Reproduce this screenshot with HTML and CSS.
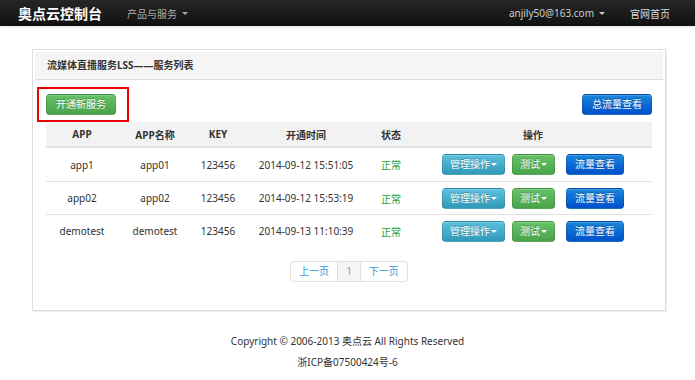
FILE: index.html
```html
<!DOCTYPE html>
<html>
<head>
    <meta charset="utf-8">
    <title>奥点云控制台</title>
    <link rel="stylesheet" href="styles.css">
</head>
<body>
    <div class="navbar">
        <span class="brand">奥点云控制台</span>
        <span class="nav-item products">产品与服务 <b class="caret"></b></span>
        <div class="nav-right">
            <span class="nav-item user">anjily50@163.com <b class="caret"></b></span>
            <span class="nav-item home">官网首页</span>
        </div>
    </div>

    <div class="panel">
        <div class="panel-heading">流媒体直播服务LSS——服务列表</div>
        <div class="panel-body">
            <div class="toolbar">
                <span class="highlight"><span class="btn btn-success">开通新服务</span></span>
                <span class="btn btn-primary">总流量查看</span>
            </div>

            <table class="list">
                <colgroup>
                    <col class="c-app">
                    <col class="c-name">
                    <col class="c-key">
                    <col class="c-time">
                    <col class="c-status">
                    <col class="c-ops">
                </colgroup>
                <thead>
                    <tr>
                        <th>APP</th>
                        <th>APP名称</th>
                        <th>KEY</th>
                        <th>开通时间</th>
                        <th>状态</th>
                        <th>操作</th>
                    </tr>
                </thead>
                <tbody>
                    <tr>
                        <td>app1</td>
                        <td>app01</td>
                        <td>123456</td>
                        <td>2014-09-12 15:51:05</td>
                        <td class="ok">正常</td>
                        <td>
                            <div class="ops">
                                <span class="btn btn-info">管理操作<b class="caret"></b></span>
                                <span class="btn btn-success">测试<b class="caret"></b></span>
                                <span class="btn btn-primary">流量查看</span>
                            </div>
                        </td>
                    </tr>
                    <tr>
                        <td>app02</td>
                        <td>app02</td>
                        <td>123456</td>
                        <td>2014-09-12 15:53:19</td>
                        <td class="ok">正常</td>
                        <td>
                            <div class="ops">
                                <span class="btn btn-info">管理操作<b class="caret"></b></span>
                                <span class="btn btn-success">测试<b class="caret"></b></span>
                                <span class="btn btn-primary">流量查看</span>
                            </div>
                        </td>
                    </tr>
                    <tr>
                        <td>demotest</td>
                        <td>demotest</td>
                        <td>123456</td>
                        <td>2014-09-13 11:10:39</td>
                        <td class="ok">正常</td>
                        <td>
                            <div class="ops">
                                <span class="btn btn-info">管理操作<b class="caret"></b></span>
                                <span class="btn btn-success">测试<b class="caret"></b></span>
                                <span class="btn btn-primary">流量查看</span>
                            </div>
                        </td>
                    </tr>
                </tbody>
            </table>

            <div class="pagination">
                <span class="page">上一页</span>
                <span class="page current">1</span>
                <span class="page">下一页</span>
            </div>
        </div>
    </div>

    <div class="footer">
        <p>Copyright © 2006-2013 奥点云 All Rights Reserved</p>
        <p>浙ICP备07500424号-6</p>
    </div>
</body>
</html>
```

FILE: styles.css
```css
body {
    margin: 0;
    font-family: "Noto Sans", "Noto Sans CJK SC", sans-serif;
    font-size: 10px;
    color: #333;
    background: #fff;
}
.navbar {
    height: 26px;
    display: flex;
    align-items: center;
    padding: 0 25px 0 18px;
    background: linear-gradient(#262626, #111);
    box-shadow: 0 1px 2px rgba(0,0,0,0.12);
}
.brand {
    color: #fff;
    font-size: 14px;
    font-weight: bold;
}
.nav-item {
    display: flex;
    align-items: center;
    gap: 5px;
}
.products {
    margin-left: 25px;
    color: #aaa;
}
.nav-right {
    margin-left: auto;
    display: flex;
    align-items: center;
    gap: 25px;
}
.user { color: #ccc; }
.home { color: #ddd; }
.caret {
    display: inline-block;
    width: 0;
    height: 0;
    border-top: 3px solid currentColor;
    border-left: 3px solid transparent;
    border-right: 3px solid transparent;
}
.panel {
    width: 632px;
    margin: 23px 0 0 32px;
    border: 1px solid #ddd;
    box-shadow: 1px 1px 0 #eee;
}
.panel-heading {
    margin: 2px 2px 0;
    height: 27px;
    line-height: 27px;
    padding-left: 12px;
    background: #f5f5f5;
    border-bottom: 1px solid #ddd;
    font-weight: bold;
}
.panel-body {
    padding: 7px 13px 28px;
}
.toolbar {
    display: flex;
    align-items: center;
    justify-content: space-between;
}
.highlight {
    display: inline-block;
    padding: 5px 11px 5px 7px;
    margin-left: -9px;
    border: 2px solid #e00;
}
.btn {
    display: inline-flex;
    align-items: center;
    gap: 1px;
    height: 19px;
    padding: 0 9px;
    border: 1px solid rgba(0,0,0,0.12);
    border-radius: 4px;
    color: #fff;
    line-height: 19px;
    text-shadow: 0 -1px 0 rgba(0,0,0,0.25);
    box-shadow: inset 0 1px 0 rgba(255,255,255,0.2);
}
.btn-success { background: linear-gradient(#66c266, #4aa34a); }
.btn-primary { background: linear-gradient(#1a86d8, #0050cc); }
.btn-info { background: linear-gradient(#5cc0de, #319ab8); }
.btn .caret { border-top-color: #fff; }
.list {
    width: 100%;
    border-collapse: collapse;
    text-align: center;
}
.c-app { width: 72px; }
.c-name { width: 74px; }
.c-key { width: 52px; }
.c-time { width: 124px; }
.c-status { width: 46px; }
.list th {
    height: 24px;
    padding: 0;
    background: #f2f2f2;
    border-bottom: 2px solid #e2e2e2;
    font-weight: bold;
}
.list td {
    height: 32px;
    padding: 0;
    border-top: 1px solid #e2e2e2;
}
.list tbody tr:first-child td {
    border-top: none;
    height: 33px;
}
.ok { color: #2ca02c; }
.ops {
    display: flex;
    justify-content: center;
}
.ops .btn { padding: 0 8px; }
.ops .btn-info,
.ops .btn-success { padding: 0 7px; }
.ops .btn-info { margin-right: 7px; }
.ops .btn-success { margin-right: 11px; }
.pagination {
    display: flex;
    justify-content: center;
    margin-top: 14px;
}
.page {
    height: 19px;
    line-height: 19px;
    padding: 0 8px;
    border: 1px solid #e0e0e0;
    border-left: none;
    color: #3399dd;
}
.page:first-child {
    border-left: 1px solid #e0e0e0;
    border-radius: 4px 0 0 4px;
}
.page:last-child { border-radius: 0 4px 4px 0; }
.page.current {
    background: #f5f5f5;
    color: #999;
}
.footer {
    margin-top: 20px;
    text-align: center;
}
.footer p {
    margin: 0;
    line-height: 21px;
}
```
